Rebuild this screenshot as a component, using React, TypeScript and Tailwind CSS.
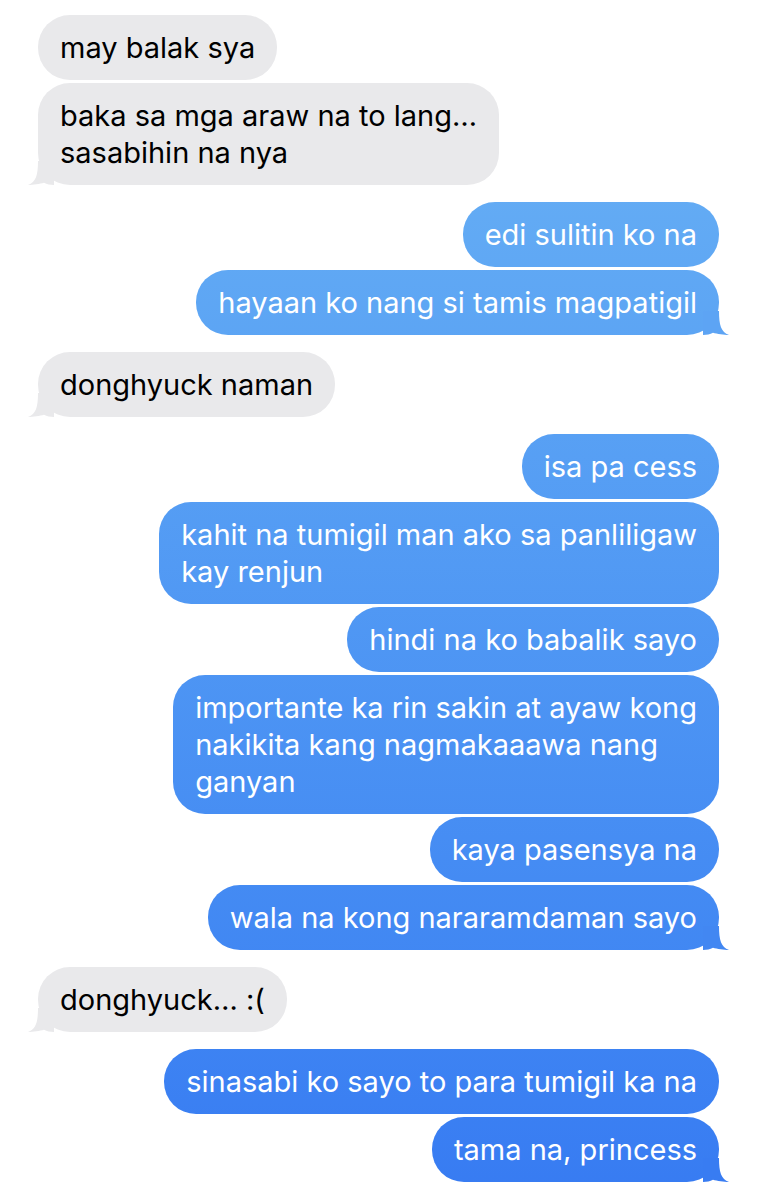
import React from 'react';

type Msg = {
  lines: string[];
};

type Group = {
  fromMe: boolean;
  tailColor: string;
  messages: Msg[];
};

const groups: Group[] = [
  {
    fromMe: false,
    tailColor: 'text-[#e9e9eb]',
    messages: [
      { lines: ['may balak sya'] },
      { lines: ['baka sa mga araw na to lang…', 'sasabihin na nya'] },
    ],
  },
  {
    fromMe: true,
    tailColor: 'text-[#5da4f4]',
    messages: [
      { lines: ['edi sulitin ko na'] },
      { lines: ['hayaan ko nang si tamis magpatigil'] },
    ],
  },
  {
    fromMe: false,
    tailColor: 'text-[#e9e9eb]',
    messages: [{ lines: ['donghyuck naman'] }],
  },
  {
    fromMe: true,
    tailColor: 'text-[#4287f2]',
    messages: [
      { lines: ['isa pa cess'] },
      { lines: ['kahit na tumigil man ako sa panliligaw', 'kay renjun'] },
      { lines: ['hindi na ko babalik sayo'] },
      {
        lines: [
          'importante ka rin sakin at ayaw kong',
          'nakikita kang nagmakaaawa nang',
          'ganyan',
        ],
      },
      { lines: ['kaya pasensya na'] },
      { lines: ['wala na kong nararamdaman sayo'] },
    ],
  },
  {
    fromMe: false,
    tailColor: 'text-[#e9e9eb]',
    messages: [{ lines: ['donghyuck… :('] }],
  },
  {
    fromMe: true,
    tailColor: 'text-[#387cf2]',
    messages: [
      { lines: ['sinasabi ko sayo to para tumigil ka na'] },
      { lines: ['tama na, princess'] },
    ],
  },
];

// little curl under the last bubble of a run
const Tail: React.FC<{ fromMe: boolean; color: string }> = ({ fromMe, color }) => (
  <svg
    width="26"
    height="24"
    viewBox="0 0 26 24"
    className={`absolute bottom-0 ${color} ${fromMe ? '-right-[10px]' : '-left-[10px] -scale-x-100'}`}
  >
    <path
      d="M16 0 C16 14 18 21 26 24 C21 24 14 23 10 21.8 C7 23.2 4 24 0 24 L0 0 Z"
      fill="currentColor"
    />
  </svg>
);

const Bubble: React.FC<{ msg: Msg; fromMe: boolean; last: boolean; tailColor: string }> = ({
  msg,
  fromMe,
  last,
  tailColor,
}) => (
  <div
    className={`relative rounded-[32px] px-[22px] py-[14px] text-[29px] leading-[37px] whitespace-nowrap ${
      fromMe
        ? 'self-end bg-linear-to-b from-[#6cb4f4] to-[#377bf2] bg-fixed text-white'
        : 'self-start bg-[#e9e9eb] text-black'
    }`}
  >
    {msg.lines.map((line, i) => (
      <div key={i}>{line}</div>
    ))}
    {last && <Tail fromMe={fromMe} color={tailColor} />}
  </div>
);

export default function App() {
  return (
    <div
      className="min-h-[1200px] w-[757px] bg-white px-[38px] pt-[15px]"
      style={{ fontFamily: 'Inter, "Noto Sans", sans-serif' }}
    >
      <div className="flex flex-col gap-[17px]">
        {groups.map((g, gi) => (
          <div key={gi} className="flex flex-col gap-[3px]">
            {g.messages.map((m, mi) => (
              <Bubble
                key={mi}
                msg={m}
                fromMe={g.fromMe}
                last={mi === g.messages.length - 1}
                tailColor={g.tailColor}
              />
            ))}
          </div>
        ))}
      </div>
    </div>
  );
}
